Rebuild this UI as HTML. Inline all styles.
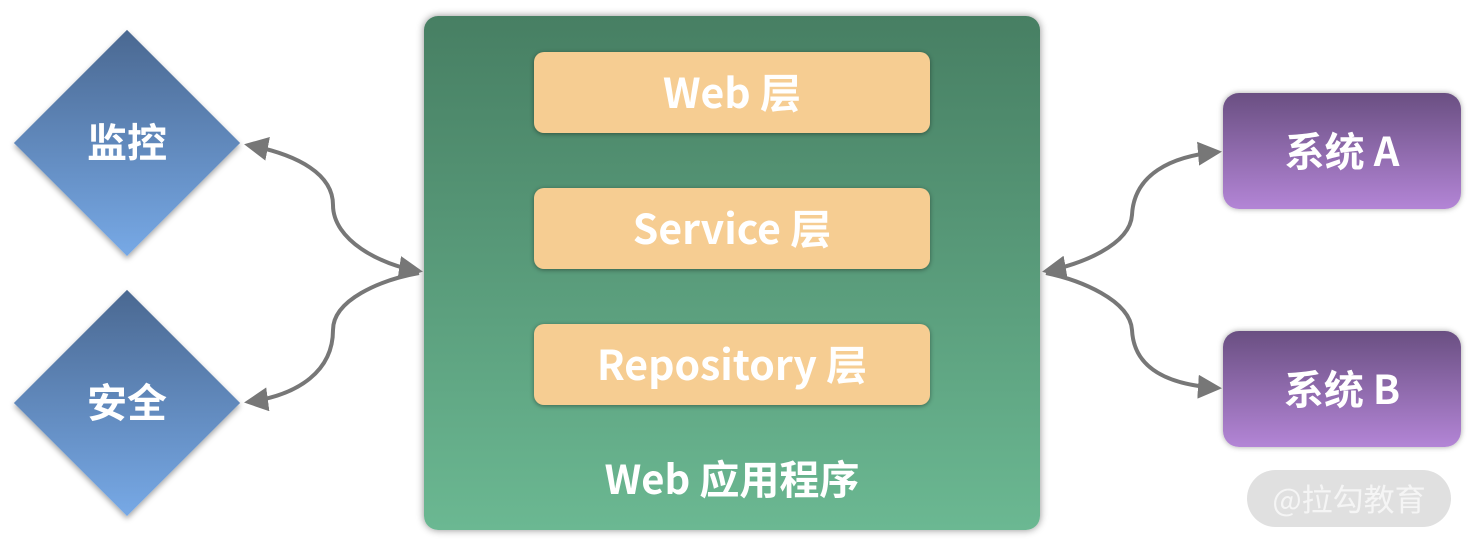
<!DOCTYPE html>
<html><head><meta charset="utf-8"><style>
body{margin:0;width:1474px;height:547px;background:#fff;position:relative;overflow:hidden;font-family:"Noto Sans CJK SC","Liberation Sans",sans-serif;font-weight:bold;color:#fff}
.d{position:absolute;width:160px;height:160px;transform:rotate(45deg);box-shadow:2px 2px 6px rgba(0,0,0,.35)}
.dl{position:absolute;width:228px;text-align:center;font-size:40px;line-height:44px}
.g{position:absolute;left:424px;top:16px;width:616px;height:514px;border-radius:14px;background:linear-gradient(#477f63,#6bb892);box-shadow:0 0 8px rgba(0,0,0,.45)}
.o{position:absolute;left:534px;width:396px;height:81px;border-radius:10px;background:#f6cd92;box-shadow:0 1px 5px rgba(0,0,0,.4);text-align:center;line-height:76px;font-size:41px}
.p{position:absolute;left:1223px;width:238px;height:116px;border-radius:16px;background:linear-gradient(#6a4f82,#b385d6);box-shadow:0 0 6px rgba(0,0,0,.35);text-align:center;line-height:112px;font-size:40px}
</style></head><body>
<div class="d" style="left:47px;top:63px;background:linear-gradient(135deg,#4a6891,#77a9e6)"></div>
<div class="dl" style="left:13px;top:118px">监控</div>
<div class="d" style="left:47px;top:323px;background:linear-gradient(135deg,#4a6891,#77a9e6)"></div>
<div class="dl" style="left:13px;top:378px">安全</div>
<div class="g"></div>
<div class="o" style="top:52px">Web 层</div>
<div class="o" style="top:188px">Service 层</div>
<div class="o" style="top:324px">Repository 层</div>
<div style="position:absolute;left:424px;width:616px;top:452px;text-align:center;font-size:40px;line-height:50px">Web 应用程序</div>
<div class="p" style="top:93px">系统 A</div>
<div class="p" style="top:331px">系统 B</div>
<div style="position:absolute;left:1247px;top:470px;width:204px;height:57px;border-radius:29px;background:#e0e0e0;color:#f5f5f5;font-size:31px;line-height:55px;text-align:center;font-weight:normal">@拉勾教育</div>
<svg width="1474" height="547" style="position:absolute;left:0;top:0">
<defs><marker id="a" markerWidth="6" markerHeight="6" refX="5" refY="3" orient="auto-start-reverse" markerUnits="strokeWidth"><path d="M0,0 L6,3 L0,6 z" fill="#777"/></marker></defs>
<g fill="none" stroke="#777" stroke-width="4">
<path d="M419,271 C380,265 333,240 333,205 C333,175 300,155 248,145" marker-start="url(#a)" marker-end="url(#a)"/>
<path d="M419,273 C380,280 333,300 333,330 C333,370 300,395 248,402" marker-end="url(#a)"/>
<path d="M1046,271 C1080,265 1130,245 1132,215 C1134,175 1170,156 1218,152" marker-start="url(#a)" marker-end="url(#a)"/>
<path d="M1046,273 C1080,280 1130,300 1132,330 C1134,370 1170,385 1218,388" marker-end="url(#a)"/>
</g></svg>
</body></html>
